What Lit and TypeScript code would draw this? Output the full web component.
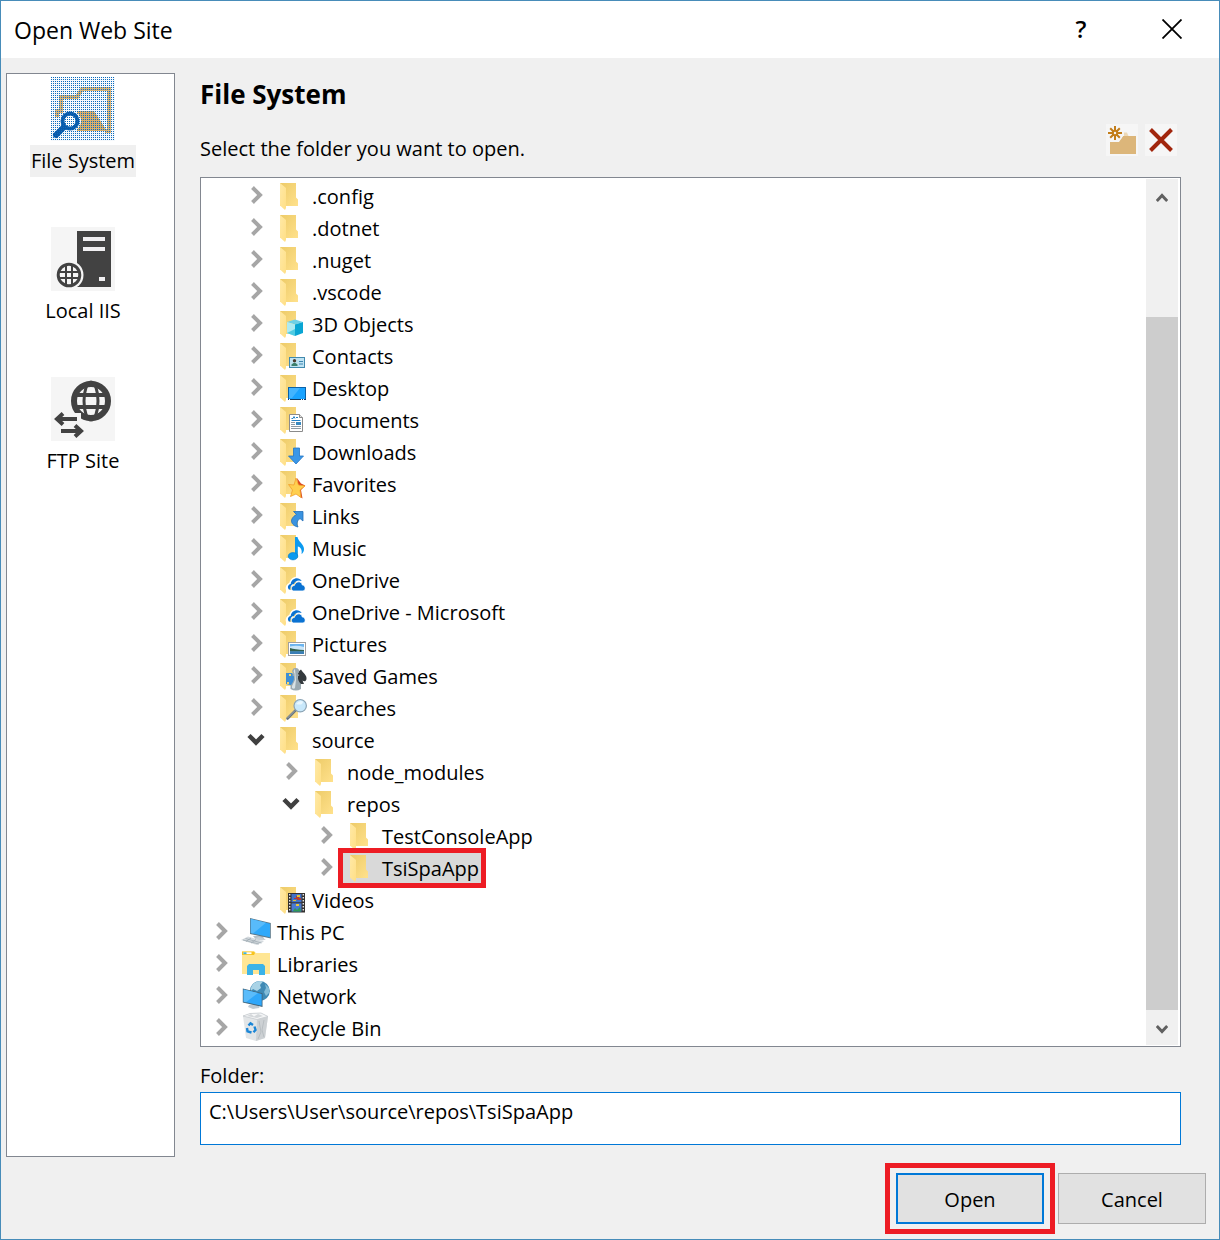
import { LitElement, html, css, svg, nothing, SVGTemplateResult } from "lit";
import { customElement, property, state } from "lit/decorators.js";
import { classMap } from "lit/directives/class-map.js";
import { styleMap } from "lit/directives/style-map.js";

interface Node {
  name: string;
  level: number;
  icon: string;
  open?: boolean;
}

const NODES: Node[] = [
  { name: ".config", level: 1, icon: "folder" },
  { name: ".dotnet", level: 1, icon: "folder" },
  { name: ".nuget", level: 1, icon: "folder" },
  { name: ".vscode", level: 1, icon: "folder" },
  { name: "3D Objects", level: 1, icon: "cube" },
  { name: "Contacts", level: 1, icon: "contacts" },
  { name: "Desktop", level: 1, icon: "desktop" },
  { name: "Documents", level: 1, icon: "documents" },
  { name: "Downloads", level: 1, icon: "downloads" },
  { name: "Favorites", level: 1, icon: "favorites" },
  { name: "Links", level: 1, icon: "links" },
  { name: "Music", level: 1, icon: "music" },
  { name: "OneDrive", level: 1, icon: "onedrive" },
  { name: "OneDrive - Microsoft", level: 1, icon: "onedrive" },
  { name: "Pictures", level: 1, icon: "pictures" },
  { name: "Saved Games", level: 1, icon: "games" },
  { name: "Searches", level: 1, icon: "searches" },
  { name: "source", level: 1, icon: "folder", open: true },
  { name: "node_modules", level: 2, icon: "folder" },
  { name: "repos", level: 2, icon: "folder", open: true },
  { name: "TestConsoleApp", level: 3, icon: "folder" },
  { name: "TsiSpaApp", level: 3, icon: "folder" },
  { name: "Videos", level: 1, icon: "videos" },
  { name: "This PC", level: 0, icon: "pc" },
  { name: "Libraries", level: 0, icon: "libraries" },
  { name: "Network", level: 0, icon: "network" },
  { name: "Recycle Bin", level: 0, icon: "bin" },
];

const folderBack = svg`
  <path d="M5 3H21V17.500L23 19.500V26H5Z" fill="url(#back)"/>
  <path d="M5 3L11 8V28L10 30L5 25.500Z" fill="url(#flap)"/>`;

const overlays: Record<string, SVGTemplateResult> = {
  folder: svg``,
  cube: svg`
    <path d="M12 14L20 11.500L28 14L20 16.500Z" fill="#6fd0e6"/>
    <path d="M12 14L20 16.500V28L12 25Z" fill="#aeeaf2"/>
    <path d="M12 25L20 21L20 28Z" fill="#4fcbe2"/>
    <path d="M28 14L20 16.500V28L28 25Z" fill="#09a5d3"/>`,
  contacts: svg`
    <rect x="14.500" y="17.500" width="15" height="10" fill="#bfe3f3" stroke="#4189ad"/>
    <circle cx="19.500" cy="20.800" r="1.700" fill="#4b3d2d"/>
    <path d="M16.500 26V24.500L18.500 23H20.500L22.500 24.500V26Z" fill="#3b7f6d"/>
    <path d="M24 21.500H28M24 24H28" stroke="#3c86b0"/>`,
  desktop: svg`
    <rect x="13.500" y="15.500" width="17" height="12" fill="#1aa3ff" stroke="#0b62a8"/>
    <path d="M14 16H25L17 26H14Z" fill="#43b4ff"/>
    <path d="M13 27.500H31" stroke="#123b63"/>
    <path d="M14 27.500H16M26 27.500H30" stroke="#fff" stroke-dasharray="1 1"/>`,
  documents: svg`
    <path d="M14.500 10.500H24.500L27.500 13.500V27.500H14.500Z" fill="#fff" stroke="#8b8b8b"/>
    <path d="M24.500 10.500V13.500H27.500" fill="#e4e4e4" stroke="#8b8b8b"/>
    <path d="M16.500 14.500H18L19 12.500L20 14.500M21 13.500H23M16.500 16.500H25.500" stroke="#2582c4" fill="none"/>
    <path d="M16 18.500H20M16 20.500H20M16 22.500H26M16 24.500H26" stroke="#8c9aa5"/>
    <rect x="21" y="18" width="5" height="3" fill="#3989c0"/>`,
  downloads: svg`<path d="M18.500 12H24.500V20H28.500L21 28L13.500 20H18.500Z" fill="#3a97e8" stroke="#2275c4" stroke-width=".8"/>`,
  favorites: svg`
    <path d="M22 10L26 15.500L30.300 17.500L26 22L27.500 30.500L24 28Z" fill="#d9481f"/>
    <path d="M21 10L23.500 17L30 18L25 22L26 29.500L21 26L15.500 28.500L17.500 22L13.500 16.500L19 17Z" fill="#ffd04f" stroke="#f2a02b" stroke-width=".8"/>`,
  links: svg`<path d="M18.500 11.500H28V21L25 18.500C22 20.500 21.500 23.500 23 27C16 25.500 13.500 19 21.500 14.500Z" fill="#3a93e0" stroke="#236fb8" stroke-width=".8"/>`,
  music: svg`
    <path d="M20 5H22.500C23 9.500 29 12 29 17C29 19.500 28 21 26.500 22C27.500 18 25.500 15 22.800 14.500V24H20Z" fill="#0b9af0"/>
    <ellipse cx="18" cy="24.200" rx="4.800" ry="3.700" fill="#0b9af0" stroke="#0679c6" stroke-width=".6"/>`,
  onedrive: svg`
    <path d="M13 26C12 23 13.500 21 16 20.500C17 15 23 12.500 27 17" fill="none" stroke="#fff" stroke-width="4"/>
    <path d="M15.500 25.500H14C12 23.500 13 20.500 15.700 20C16 14.500 23.500 11.800 26.700 17C23 15.500 20 17 19 20C16.500 20 15 22.500 15.500 25.500Z" fill="#0a72d2"/>
    <path d="M18 27C15.300 25.500 16.300 21.500 19.300 21.500C20.500 17 26.500 16.500 27.300 21C31 21 31 27 28 27Z" fill="#0a72d2" stroke="#fff" stroke-width=".8"/>`,
  pictures: svg`
    <rect x="13.500" y="14.500" width="17" height="13" fill="#fff" stroke="#a0a0a0"/>
    <rect x="15" y="16" width="14" height="10" fill="#6bb4ef"/>
    <path d="M15 18.500Q22 17 29 19V22H15Z" fill="#cbe6f8"/>
    <path d="M15 20Q20 21.500 29 22V23.500H15Z" fill="#32614d"/>
    <path d="M15 23.500H29V26H15Z" fill="#3a7eb5"/>`,
  games: svg`
    <path d="M11 13H17L19 15V26L11 24Z" fill="#3f8fd4"/>
    <path d="M14 14h2v2h-2zM12 22h2v2h-2z" fill="#ffd75c"/>
    <path d="M26 9.500C28 13 32 15 31.500 19C31 22 28.500 21.500 27.500 20.500L29 24H23V12Z" fill="#34393d"/>
    <path d="M20.500 8A3.300 3.300 0 0 1 22.800 14L24.500 15L22.800 16.500C22.800 20 24 22 26 24V29Q21 32 15.500 29V25.500C18.500 22 19 20 19 16.500L17 15L18.500 14A3.300 3.300 0 0 1 20.500 8Z" fill="#9aa9b1"/>
    <path d="M20 9Q17.500 11 19.500 13.500L20 20L17 26V28Q19 29.500 20 28L21 20Z" fill="#d8e2e6"/>`,
  searches: svg`
    <path d="M12.500 26.500L20.800 18.200" stroke="#68747c" stroke-width="2.600" stroke-linecap="round"/>
    <path d="M12.500 26L20 18.500" stroke="#aeb9c0" stroke-width=".8"/>
    <circle cx="25.200" cy="13.700" r="6.200" fill="#c8e8fb" stroke="#8ba3b4" stroke-width="1.200"/>
    <path d="M21 12Q24 8 28 9.500Q28 14 21 12Z" fill="#e9f7ff"/>`,
  videos: svg`
    <rect x="13" y="9" width="17" height="19.500" fill="#34312f"/>
    <rect x="16.500" y="10" width="10" height="8.300" fill="#4272c8"/>
    <rect x="16.500" y="19.300" width="10" height="8.300" fill="#4a7ad2"/>
    <path d="M21 12h3v2h2v2h-4v-1h-3v-1h2z" fill="#b63a2d"/>
    <path d="M22 11h3v2h-3zM18 16h3v1h-3z" fill="#e3c438"/>
    <path d="M18 27L20 24L22 26L25 23L26 27.500H17Z" fill="#2f9a57"/>
    <path d="M21 20h3v2h-3z" fill="#e8c93b"/>
    <path d="M14.700 10V28M28.300 10V28" stroke="#e8e8e8" stroke-width="1.400" stroke-dasharray="1.500 1.500"/>`,
};

const roots: Record<string, SVGTemplateResult> = {
  pc: svg`
    <path d="M13 20L22 19L25 24L16 23.500Z" fill="#b5c0c7"/>
    <path d="M10 2L30.800 7V22.500L10 18Z" fill="#5b7889"/>
    <path d="M10.800 3L30 7.700V21.300L10.800 17Z" fill="#2fa9fa"/>
    <path d="M10.800 3L26 6.800L13 17.500L10.800 17Z" fill="#58bbfb"/>
    <path d="M14 22.500L22 24.500L26 23.500L19 21Z" fill="#c7d0d6"/>
    <path d="M1 24L8 20.500L24 25.500L17 29Z" fill="#d4dade"/>
    <path d="M3 24L19 28M5.500 22.500L21.500 27M6 25.500L11 22M11 27L16 23.500" stroke="#98a5ad" stroke-width=".7"/>`,
  libraries: svg`
    <path d="M2 3.500H14.500L16 5H30V26H2Z" fill="#ffe694"/>
    <path d="M2 3.500H14L15 5L14 7H2Z" fill="#f7c41f"/>
    <rect x="3.500" y="4.300" width="8" height="1.800" fill="#fff"/>
    <rect x="3.500" y="4.300" width="3" height="1.800" fill="#39b4e6"/>
    <path d="M7 27V18L9 16H23L25 18V27H19V22H13V27Z" fill="#3bb3e8"/>`,
  network: svg`
    <circle cx="19.800" cy="11" r="10" fill="#3f8ab5"/>
    <path d="M13 4Q18 0 23 1.500L20 5L21 8L17 11L13 9L11 11Q10 8 13 4Z" fill="#a9d3e6"/>
    <path d="M25 4L29 8V13L26 16L24 12L26 8Z" fill="#82bcd8"/>
    <path d="M9 25L18 23.500L19.500 28L13 29L8 27Z" fill="#c0cad1"/>
    <path d="M2.800 8.500L22.500 13.300V27L2.800 22.500Z" fill="#416378"/>
    <path d="M3.600 9.500L21.700 14V25.800L3.600 21.700Z" fill="#2fa7fa"/>
    <path d="M3.600 9.500L18 13L6 22.200L3.600 21.700Z" fill="#5abcfb"/>`,
  bin: svg`
    <path d="M3 4L10 1.500L21 1L28 4.500L25 26L16 29L6 26Z" fill="#e2e5e7"/>
    <path d="M3 4L10 1.500L21 1L28 4.500L17 7.500Z" fill="#f5f6f7" stroke="#bfc4c8" stroke-width=".7"/>
    <path d="M7 4L11 2L14 4.500L18 2L23 4L17 6Z" fill="#d3d7da"/>
    <path d="M17 7.500L28 4.500L25 26L16 29Z" fill="#cdd1d4"/>
    <path d="M19 9L21 20L18 27M24 8L22 18L24 25" stroke="#b3b9bd" stroke-width=".8" fill="none"/>
    <path d="M8.500 13.500L10.500 11.300L13 13M14.500 14.500L15.500 18L13.500 20.200M11.500 20.500L7.500 19.300L7 16" stroke="#1b86d6" stroke-width="2.400" fill="none"/>`,
};

/** Icon of one entry of the folder tree, on a 32-unit grid. */
@customElement("node-icon")
export class NodeIcon extends LitElement {
  static styles = css`
    :host { display: block; width: 32px; height: 32px; }
    .art { display: block; width: 32px; height: 32px; }
  `;
  @property() name = "folder";

  render() {
    const root = roots[this.name];
    return html`<svg class="art" viewBox="0 0 32 32" aria-hidden="true">
      <defs>
        <linearGradient id="back" x1="0" x2="1" y2="1">
          <stop offset="0" stop-color="#edcb68"/><stop offset="1" stop-color="#ffe18c"/>
        </linearGradient>
        <linearGradient id="flap" x1="0" x2="1" y2="1">
          <stop offset="0" stop-color="#ffe9a6"/><stop offset="1" stop-color="#ffdf86"/>
        </linearGradient>
      </defs>
      ${root ?? svg`${folderBack}${overlays[this.name] ?? nothing}`}
    </svg>`;
  }
}

const siteIcons: Record<string, SVGTemplateResult> = {
  files: svg`
    <defs>
      <pattern id="dots" width="2" height="2" patternUnits="userSpaceOnUse">
        <rect x="0" y="0" width="1" height="1" fill="#0a6bbd"/>
      </pattern>
    </defs>
    <rect width="64" height="64" fill="#f6f9fc"/>
    <path d="M6 40V34H10V20H26L31 12H58V54H54" fill="none" stroke="#dcb679" stroke-width="4"/>
    <path d="M26 34H43L56 54H26Z" fill="#dcb06a"/>
    <circle cx="19" cy="44" r="11" fill="#f6f9fc"/>
    <path d="M5 58L14 49" stroke="#0b59a8" stroke-width="6" stroke-linecap="round"/>
    <circle cx="19" cy="44" r="7.500" fill="#fff" stroke="#0b59a8" stroke-width="4"/>
    <rect width="64" height="64" fill="url(#dots)"/>`,
  iis: svg`
    <rect width="64" height="64" fill="#f5f5f5"/>
    <path d="M26 4H60V60H26Z" fill="#424242"/>
    <path d="M32 10H54V14H32ZM32 20H54V24H32ZM48 50H54V54H48Z" fill="#f0eff1"/>
    <circle cx="18" cy="48" r="14.500" fill="#f5f5f5"/>
    <circle cx="18" cy="48" r="10.800" fill="#f5f5f5" stroke="#424242" stroke-width="3"/>
    <path d="M15 37V59M21 37V59M7 45H29M7 51H29" stroke="#424242" stroke-width="2"/>`,
  ftp: svg`
    <rect width="64" height="64" fill="#f5f5f5"/>
    <circle cx="40" cy="24" r="17" fill="#f5f5f5" stroke="#424242" stroke-width="6"/>
    <path d="M22 18H58M22 30H58" stroke="#424242" stroke-width="4"/>
    <ellipse cx="40" cy="24" rx="7" ry="19" fill="none" stroke="#424242" stroke-width="3"/>
    <path d="M2 36H30V48H2Z" fill="#f5f5f5"/>
    <path d="M6 42H26M12 36.500L6 42L12 47.500M10 54H30M24 48.500L30 54L24 59.500" fill="none" stroke="#424242" stroke-width="4"/>`,
};

const SITES = [
  { key: "files", label: "File System" },
  { key: "iis", label: "Local IIS" },
  { key: "ftp", label: "FTP Site" },
];

@customElement("app-root")
export class AppRoot extends LitElement {
  static styles = css`
    :host {
      display: block;
      font: 20px/32px "Open Sans", "Segoe UI", sans-serif;
      color: #000;
    }
    * { box-sizing: border-box; }
    button, input { font: inherit; color: inherit; margin: 0; padding: 0; border-radius: 0; }
    button { border: 0; background: none; cursor: pointer; }
    svg { display: block; }
    .dialog {
      display: flex;
      flex-direction: column;
      min-height: 100vh;
      border: 1px solid #478cb9;
      background: #f0f0f0;
    }
    .titlebar {
      display: flex;
      align-items: center;
      height: 57px;
      padding: 0 31px 0 13px;
      background: #fff;
    }
    .title { flex: 1; margin: 0; font-size: 23px; font-weight: 400; }
    .caption { display: grid; place-items: center; width: 32px; height: 32px; }
    .captions { display: flex; gap: 59px; padding-bottom: 2px; }
    .help { font-size: 24px; font-weight: 600; }
    .main { display: flex; gap: 25px; flex: 1; padding: 15px 38px 5px 5px; }
    .sites {
      display: flex;
      flex-direction: column;
      align-items: flex-start;
      gap: 50px;
      width: 169px;
      padding-top: 3px;
      border: 1px solid #828790;
      background: #fff;
    }
    .picker { display: flex; flex-direction: column; flex: 1; min-width: 0; }
    .site { display: flex; flex-direction: column; align-items: center; gap: 4px; width: 152px; }
    .site-label { padding: 0 1px; white-space: nowrap; }
    .site.current .site-label { background: #f0f0f0; }
    .heading { margin: 5px 0 12px; font-size: 26px; line-height: 32px; font-weight: 700; }
    .prompt-row { display: flex; justify-content: space-between; padding-right: 4px; margin-bottom: 11px; }
    .prompt { padding-top: 11px; height: 44px; }
    .tools { display: flex; gap: 7px; padding-top: 2px; }
    .tool { width: 32px; height: 32px; background: #f6f6f6; }
    .tree-box {
      display: flex;
      padding: 1px 2px 1px 0;
      border: 1px solid #828790;
      background: #fff;
    }
    .tree { flex: 1; list-style: none; margin: 0; padding: 1px 0; min-width: 0; }
    .row { display: flex; align-items: center; height: 32px; padding-left: 6px; }
    .twist { width: 33px; height: 32px; flex: none; }
    .node { display: flex; align-items: center; height: 32px; padding-right: 4px; }
    .node-label { padding: 2px 0 0 5px; line-height: 30px; white-space: nowrap; }
    .selected .node { background: #d9d9d9; box-shadow: -2px 0 #d9d9d9; }
    .indent { flex: none; }
    .marked { position: relative; }
    .marked::after {
      content: "";
      position: absolute;
      inset: -4px -3px -4px -7px;
      border: 5px solid #ed1c24;
      pointer-events: none;
    }
    .scrollbar { display: flex; flex-direction: column; width: 32px; background: #f0f0f0; }
    .arrow { display: grid; place-items: center; width: 32px; height: 35px; padding-top: 2px; }
    .track { flex: 1; display: flex; flex-direction: column; }
    .thumb { margin-top: auto; width: 100%; background: #cdcdcd; }
    .folder-label { margin-top: 13px; }
    .folder {
      width: 100%;
      height: 53px;
      padding: 0 8px 14px;
      border: 1px solid #0078d7;
      background: #fff;
      outline: none;
    }
    .actions { display: flex; justify-content: flex-end; gap: 14px; padding: 11px 13px 15px; }
    .action { width: 148px; height: 51px; padding-top: 2px; border: 1px solid #adadad; background: #e1e1e1; }
    .action.primary { border: 2px solid #0078d7; }
    .action.marked::after { inset: -12px -13px; }
  `;

  @state() private selected = "TsiSpaApp";
  @state() private site = "files";
  @state() private nodes = NODES;

  private toggle(node: Node) {
    this.nodes = this.nodes.map((n) => (n === node ? { ...n, open: !n.open } : n));
  }

  private visible() {
    let hiddenBelow = Infinity;
    return this.nodes.filter((n, i) => {
      if (n.level > hiddenBelow) return false;
      const hasChildren = (this.nodes[i + 1]?.level ?? 0) > n.level;
      hiddenBelow = hasChildren && !n.open ? n.level : Infinity;
      return true;
    });
  }

  private row(node: Node) {
    const on = node.name === this.selected;
    return html`<li class=${classMap({ row: true, selected: on })} role="treeitem"
        aria-level=${node.level + 1} aria-selected=${on} aria-expanded=${!!node.open}>
      <span class="indent" style=${styleMap({ width: `${node.level * 35}px` })}></span>
      <button class="twist" aria-label=${`Toggle ${node.name}`} @click=${() => this.toggle(node)}>
        <svg width="33" height="32" viewBox="0 0 33 32" aria-hidden="true">
          ${node.open
            ? svg`<path d="M7 11.500L14 18.500L21 11.500" fill="none" stroke="#404040" stroke-width="4.500"/>`
            : svg`<path d="M10.500 7.500L18 15L10.500 22.500" fill="none" stroke="#a6a6a6" stroke-width="4"/>`}
        </svg>
      </button>
      <button class=${classMap({ node: true, marked: on })} @click=${() => (this.selected = node.name)}>
        <node-icon name=${node.icon}></node-icon>
        <span class="node-label">${node.name}</span>
      </button>
    </li>`;
  }

  render() {
    return html`<div class="dialog" role="dialog" aria-labelledby="title">
      <header class="titlebar">
        <h1 class="title" id="title">Open Web Site</h1>
        <div class="captions">
          <button class="caption help">?</button>
          <button class="caption" aria-label="Close">
            <svg width="20" height="20" viewBox="0 0 20 20"><path d="M.5 .5L19.500 19.500M19.500 .5L.5 19.500" stroke="#000" stroke-width="1.800"/></svg>
          </button>
        </div>
      </header>
      <div class="main">
        <nav class="sites" aria-label="Source">
          ${SITES.map((s) => html`
            <button class=${classMap({ site: true, current: this.site === s.key })} @click=${() => (this.site = s.key)}>
              <svg width="64" height="64" viewBox="0 0 64 64" aria-hidden="true">${siteIcons[s.key]}</svg>
              <span class="site-label">${s.label}</span>
            </button>`)}
        </nav>
        <section class="picker">
          <h2 class="heading">File System</h2>
          <div class="prompt-row">
            <span class="prompt">Select the folder you want to open.</span>
            <div class="tools">
              <button class="tool" aria-label="New folder">
                <svg width="32" height="32" viewBox="0 0 32 32">
                  <path d="M4 18H13L17 12H30V30H4Z" fill="#dcb67a"/>
                  <path d="M18 12V8.500H21L22.500 12Z" fill="#ecd9b8"/>
                  <circle cx="9" cy="9" r="8.500" fill="#f6f6f6"/>
                  <path d="M9 2V16M2 9H16M4.200 4.200L13.800 13.800M13.800 4.200L4.200 13.800" stroke="#c27d1a" stroke-width="2"/>
                  <circle cx="9" cy="9" r="2.200" fill="#f6f6f6" stroke="#c27d1a" stroke-width="2"/>
                </svg>
              </button>
              <button class="tool" aria-label="Delete">
                <svg width="32" height="32" viewBox="0 0 32 32"><path d="M5.500 5.500L26.500 26.500M26.500 5.500L5.500 26.500" stroke="#a1260d" stroke-width="4"/></svg>
              </button>
            </div>
          </div>
          <div class="tree-box">
            <ul class="tree" role="tree" aria-label="Folders">${this.visible().map((n) => this.row(n))}</ul>
            <div class="scrollbar">
              <button class="arrow" aria-label="Scroll up">
                <svg width="12" height="10" viewBox="0 0 12 10"><path d="M.8 8L6 2.500L11.200 8" fill="none" stroke="#606060" stroke-width="3"/></svg>
              </button>
              <div class="track"><div class="thumb" style=${styleMap({ height: "87%" })}></div></div>
              <button class="arrow" aria-label="Scroll down">
                <svg width="12" height="10" viewBox="0 0 12 10"><path d="M.8 2L6 7.500L11.200 2" fill="none" stroke="#606060" stroke-width="3"/></svg>
              </button>
            </div>
          </div>
          <label class="folder-label" for="folder">Folder:</label>
          <input class="folder" id="folder" type="text" value="C:\\Users\\User\\source\\repos\\TsiSpaApp" />
        </section>
      </div>
      <footer class="actions">
        <button class="action primary marked">Open</button>
        <button class="action">Cancel</button>
      </footer>
    </div>`;
  }
}
